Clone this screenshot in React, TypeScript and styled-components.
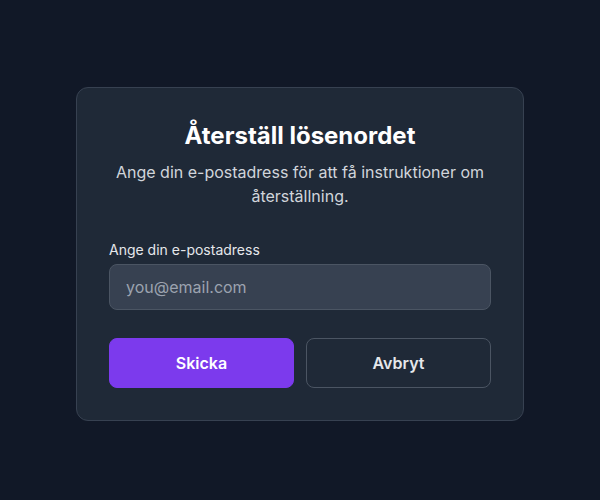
import styled, { createGlobalStyle } from 'styled-components';

const GlobalStyle = createGlobalStyle`
  html, body {
    margin: 0;
    padding: 0;
    background: #111827;
    font-family: Inter, "Noto Sans", sans-serif;
  }
  * { box-sizing: border-box; }
`;

const Page = styled.div`
  min-height: 100vh;
  display: flex;
  justify-content: center;
  align-items: flex-start;
  padding-top: 87px;
  background: #111827;
`;

const Card = styled.div`
  width: 448px;
  background: #1f2937;
  border: 1px solid #374151;
  border-radius: 12px;
  padding: 32px;
  display: flex;
  flex-direction: column;
`;

const Title = styled.h2`
  margin: 0;
  font-size: 24px;
  line-height: 32px;
  font-weight: 700;
  color: #ffffff;
  text-align: center;
`;

const Subtitle = styled.p`
  margin: 8px 0 32px;
  font-size: 16px;
  line-height: 24px;
  color: #d1d5db;
  text-align: center;
`;

const Label = styled.label`
  display: block;
  font-size: 14px;
  line-height: 20px;
  font-weight: 400;
  color: #e5e7eb;
  margin-bottom: 4px;
`;

const Input = styled.input`
  width: 100%;
  height: 46px;
  padding: 0 16px;
  background: #374151;
  border: 1px solid #4b5563;
  border-radius: 8px;
  font-family: inherit;
  font-size: 16px;
  color: #f3f4f6;
  outline: none;
  &::placeholder {
    color: #9ca3af;
  }
`;

const Actions = styled.div`
  display: grid;
  grid-template-columns: 1fr 1fr;
  gap: 12px;
  margin-top: 28px;
`;

const Button = styled.button<{ $primary?: boolean }>`
  height: 50px;
  border-radius: 8px;
  font-family: inherit;
  font-size: 16px;
  font-weight: 600;
  cursor: pointer;
  color: ${(p) => (p.$primary ? '#ffffff' : '#e5e7eb')};
  background: ${(p) => (p.$primary ? '#7c3aed' : 'transparent')};
  border: 1px solid ${(p) => (p.$primary ? '#7c3aed' : '#4b5563')};
`;

export default function App() {
  return (
    <>
      <GlobalStyle />
      <Page>
        <Card>
          <Title>Återställ lösenordet</Title>
          <Subtitle>Ange din e-postadress för att få instruktioner om återställning.</Subtitle>
          <Label htmlFor="email">Ange din e-postadress</Label>
          <Input id="email" type="email" placeholder="you@email.com" />
          <Actions>
            <Button $primary>Skicka</Button>
            <Button>Avbryt</Button>
          </Actions>
        </Card>
      </Page>
    </>
  );
}
